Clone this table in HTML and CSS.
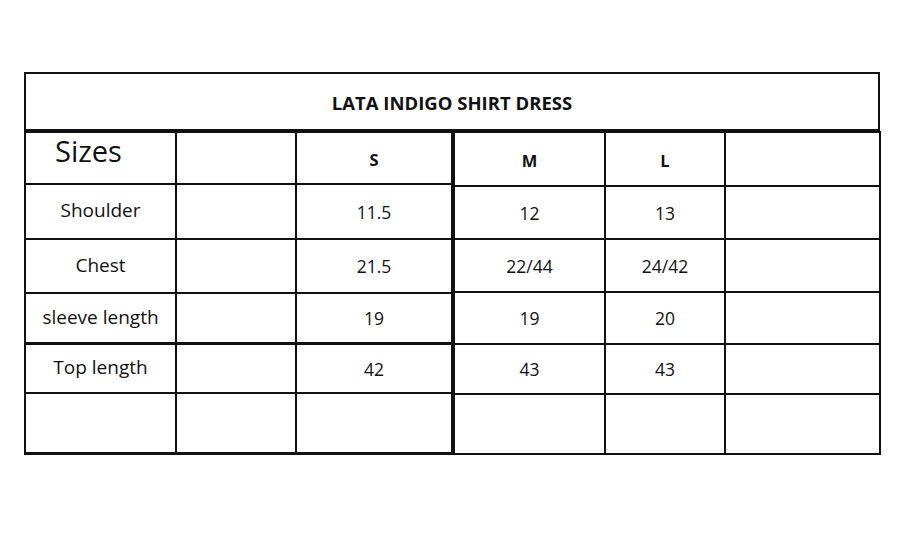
FILE: index.html
```html
<!DOCTYPE html>
<html>
<head>
<meta charset="utf-8">
<link rel="stylesheet" href="styles.css">
</head>
<body>
<div class="page">
  <div class="title">LATA INDIGO SHIRT DRESS</div>
  <div class="tables">
    <div class="grid left">
      <div class="cell sizes">Sizes</div>
      <div class="cell"></div>
      <div class="cell head">S</div>

      <div class="cell label">Shoulder</div>
      <div class="cell"></div>
      <div class="cell num">11.5</div>

      <div class="cell label">Chest</div>
      <div class="cell"></div>
      <div class="cell num">21.5</div>

      <div class="cell label">sleeve length</div>
      <div class="cell"></div>
      <div class="cell num">19</div>

      <div class="cell label thick">Top length</div>
      <div class="cell thick"></div>
      <div class="cell num thick">42</div>

      <div class="cell"></div>
      <div class="cell"></div>
      <div class="cell"></div>
    </div>
    <div class="grid right">
      <div class="cell head">M</div>
      <div class="cell head">L</div>
      <div class="cell"></div>

      <div class="cell num">12</div>
      <div class="cell num">13</div>
      <div class="cell"></div>

      <div class="cell num">22/44</div>
      <div class="cell num">24/42</div>
      <div class="cell"></div>

      <div class="cell num">19</div>
      <div class="cell num">20</div>
      <div class="cell"></div>

      <div class="cell num">43</div>
      <div class="cell num">43</div>
      <div class="cell"></div>

      <div class="cell"></div>
      <div class="cell"></div>
      <div class="cell"></div>
    </div>
  </div>
</div>
</body>
</html>
```

FILE: styles.css
```css
html, body {
  margin: 0;
  padding: 0;
  background: #ffffff;
}

body {
  font-family: "Open Sans", "Noto Sans", sans-serif;
  color: #111111;
}

.page {
  padding: 72px 0 0 24px;
}

.title {
  box-sizing: border-box;
  width: 856px;
  height: 59px;
  border: 2px solid #111111;
  display: flex;
  align-items: center;
  justify-content: center;
  font-weight: 700;
  font-size: 18.5px;
  padding-top: 2px;
}

.tables {
  display: flex;
}

.grid {
  display: grid;
  gap: 2px;
  padding: 2px;
  background: #111111;
}

.left {
  grid-template-columns: 149px 118px 154px;
  grid-template-rows: 50px 53px 52px 48px 48px 58px;
}

.right {
  grid-template-columns: 149px 118px 153px;
  grid-template-rows: 52px 51px 51px 50px 48px 58px;
}

.left + .right {
  padding-left: 2px;
}

.cell {
  background: #ffffff;
  display: flex;
  align-items: center;
  justify-content: center;
  box-sizing: border-box;
}

.thick {
  border-top: 1px solid #111111;
}

.sizes {
  justify-content: flex-start;
  align-items: flex-start;
  font-size: 29px;
  padding-left: 29px;
  line-height: 1;
  padding-top: 3px;
}

.head {
  font-weight: 700;
  font-size: 16.5px;
  padding-top: 2px;
}

.label {
  font-size: 19px;
  padding-bottom: 3px;
}

.num {
  font-size: 17.5px;
}
```
